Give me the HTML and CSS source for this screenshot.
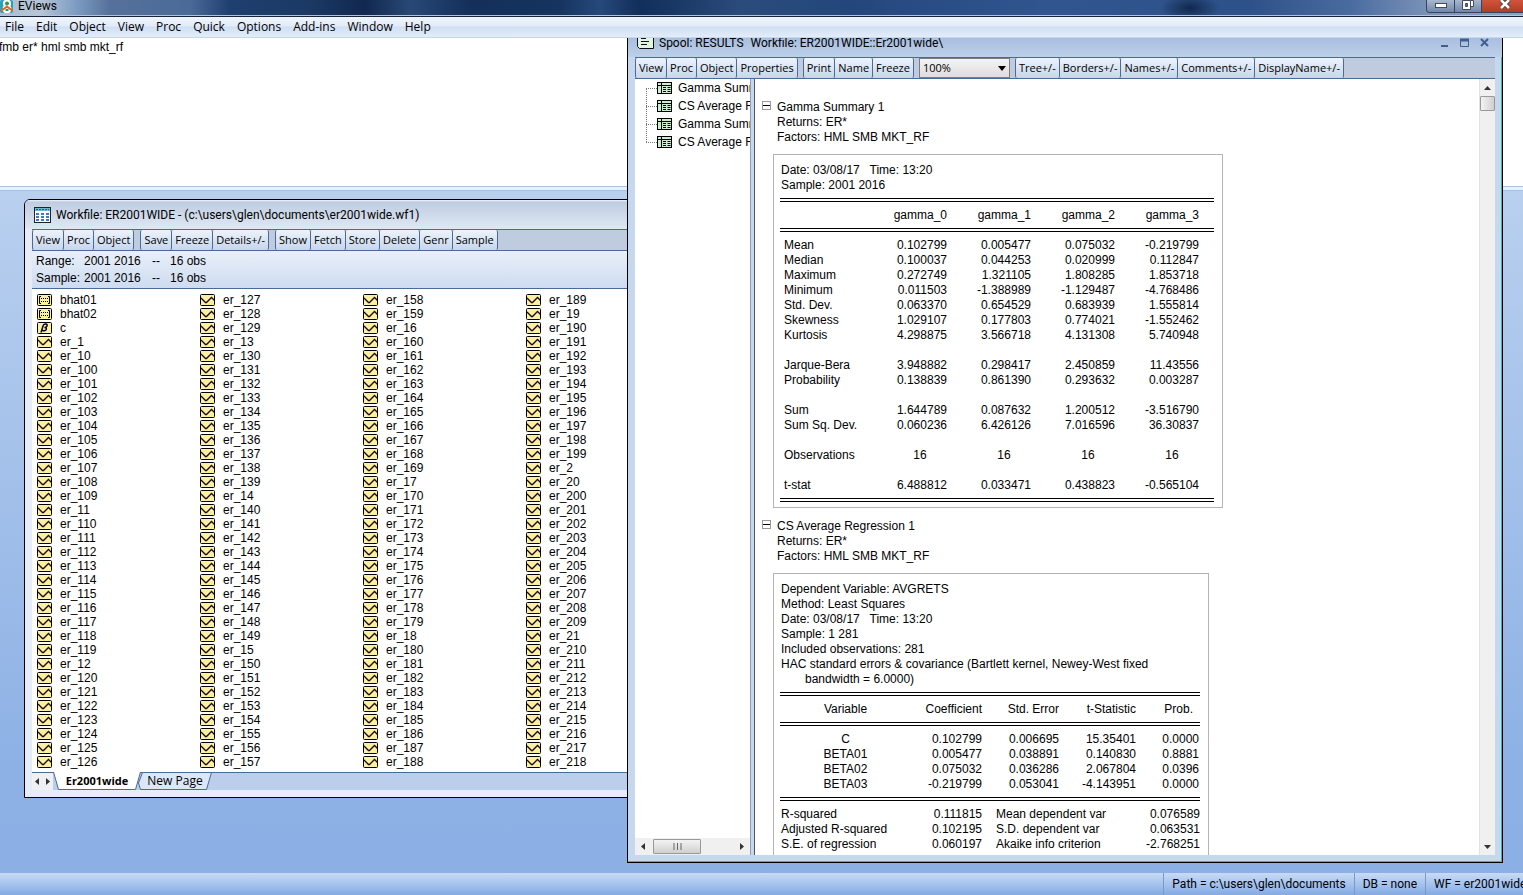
FILE: index.html
```html
<!DOCTYPE html>
<html lang="en">
<head>
<meta charset="utf-8">
<title>EViews</title>
<link rel="stylesheet" href="styles.css">
</head>
<body>
<svg class="sprite" aria-hidden="true">
  <symbol id="series" viewBox="0 0 15 12">
    <rect x="0.5" y="0.5" width="14" height="11" rx="1" fill="#fbf0a0" stroke="#000"/>
    <path d="M1 4l4.500 4.500h1L11.500 3.500l3 3" fill="none" stroke="#1a0808" stroke-width="1.300"/>
  </symbol>
  <symbol id="matrix" viewBox="0 0 15 12">
    <rect x="0.5" y="0.5" width="14" height="11" rx="1" fill="#fbf0a0" stroke="#000"/>
    <path d="M4 2.500H2.500v7H4M11 2.500h1.500v7H11" fill="none" stroke="#000"/>
    <path d="M4 4.500h7M4 7.500h7" fill="none" stroke="#000" stroke-dasharray="1 1"/>
  </symbol>
  <symbol id="coef" viewBox="0 0 15 12">
    <rect x="0.5" y="0.5" width="14" height="11" rx="1" fill="#fbf0a0" stroke="#000"/>
    <path d="M4 10.500L6.200 3.500Q7 1.800 8.800 2T10 4Q9.500 5.500 7.500 5.500Q9.800 5.700 9.300 7.500Q8.500 9.300 5.500 8.500" fill="none" stroke="#000" stroke-width="1.500"/>
  </symbol>
  <symbol id="table" viewBox="0 0 15 12">
    <rect x="0.500" y="0.500" width="14" height="11" fill="#cfeccf" stroke="#000"/>
    <path d="M0 3.500h15M4.500 0v12" stroke="#000" fill="none"/>
    <path d="M6 5.500h3M10.500 5.500h3M6 7.500h3M10.500 7.500h3M6 9.500h3M10.500 9.500h3" stroke="#000" fill="none"/>
  </symbol>
</svg>
<div class="app">
  <header class="titlebar">
    <svg class="logo" viewBox="0 0 13 13" aria-hidden="true">
      <rect width="13" height="13" rx="2" fill="#2f9fb8"/>
      <circle cx="7" cy="3.500" r="4" fill="#fff"/>
      <circle cx="7" cy="9" r="4.500" fill="#fff"/>
      <circle cx="7" cy="3.500" r="2" fill="#2d9a48"/>
      <path d="M1 10.500Q4 9 7 6.500Q10 9 13 10.500" fill="none" stroke="#e0672a" stroke-width="2"/>
      <path d="M5.500 10h3" stroke="#2d9a48" stroke-width="2"/>
    </svg>
    <span class="app-name">EViews</span>
    <div class="caption">
      <button class="cap" aria-label="Minimize"><svg width="12" height="5" viewBox="0 0 12 5"><rect x="0.500" y="0.500" width="11" height="4" fill="#fff" stroke="#444c5c"/></svg></button>
      <button class="cap" aria-label="Restore"><svg width="12" height="10" viewBox="0 0 12 10"><path d="M3.500 0.500h8v6h-8z" fill="#fff" stroke="#444c5c"/><path d="M0.500 0.500h8v9h-8z" fill="#fff" stroke="#444c5c"/><path d="M3.500 3.500h2v3h-2z" fill="#5c7199" stroke="#444c5c"/></svg></button>
      <button class="cap close" aria-label="Close"><svg width="12" height="9" viewBox="0 0 12 9"><path d="M2 0l8 8M10 0L2 8" stroke="#54403f" stroke-width="4.500"/><path d="M2 0l8 8M10 0L2 8" stroke="#fff" stroke-width="2.500"/></svg></button>
    </div>
  </header>
  <nav class="menu">
    <button>File</button><button>Edit</button><button>Object</button><button>View</button><button>Proc</button><button>Quick</button><button>Options</button><button>Add-ins</button><button>Window</button><button>Help</button>
  </nav>
  <main class="client">
    <textarea class="command" aria-label="Command window" spellcheck="false">fmb er* hml smb mkt_rf</textarea>
    <div class="splitter"></div>
    <div class="workspace"></div>

    <section class="win workfile">
      <div class="win-title">
        <svg width="17" height="16" viewBox="0 0 17 16" aria-hidden="true"><rect x="0.500" y="0.500" width="16" height="15" fill="#fff" stroke="#222"/><rect x="1" y="1" width="15" height="3" fill="#6fb7d6"/><path d="M2 2.500h13" stroke="#1e5f86" stroke-dasharray="2 1"/><path d="M3.500 6v8M8.500 6v8M13.500 6v8" stroke="#3f78c8" stroke-width="3" stroke-dasharray="2 1"/></svg>
        <span>Workfile: ER2001WIDE - (c:\users\glen\documents\er2001wide.wf1)</span>
      </div>
      <div class="toolbar">
        <div class="group"><button>View</button><button>Proc</button><button>Object</button></div>
        <div class="group"><button>Save</button><button>Freeze</button><button>Details+/-</button></div>
        <div class="group"><button>Show</button><button>Fetch</button><button>Store</button><button>Delete</button><button>Genr</button><button>Sample</button></div>
      </div>
      <dl class="info">
        <dt>Range:</dt><dd>2001 2016</dd><dd>--</dd><dd>16 obs</dd>
        <dt>Sample:</dt><dd>2001 2016</dd><dd>--</dd><dd>16 obs</dd>
      </dl>
      <ul class="objects" id="objects"></ul>
      <div class="pages">
        <div class="page-nav">
          <button aria-label="Previous page"><svg width="4" height="7" viewBox="0 0 4 7"><path d="M4 0v7L0 3.500z" fill="#333"/></svg></button>
          <button aria-label="Next page"><svg width="4" height="7" viewBox="0 0 4 7"><path d="M0 0v7l4-3.500z" fill="#333"/></svg></button>
        </div>
        <button class="page current"><svg class="tab-shape" viewBox="0 0 88 18" preserveAspectRatio="none" aria-hidden="true"><path d="M0.500 0L5.500 17.500h77L87.500 0" fill="#fff" stroke="#4c6a96"/></svg><span>Er2001wide</span></button>
        <button class="page"><svg class="tab-shape" viewBox="0 0 74 18" preserveAspectRatio="none" aria-hidden="true"><path d="M4.500 0.500L0.500 11l2 6.500h66L73.500 0.500z" fill="#dbe6f6" stroke="#4c6a96"/></svg><span>New Page</span></button>
      </div>
    </section>

    <section class="win spool">
      <div class="win-title">
        <svg width="17" height="12" viewBox="0 0 17 12" aria-hidden="true"><path d="M0.500 0v9.500l2 2h14V0" fill="#e2f4e2" stroke="#111"/><path d="M4 1.500h5M4 4.500h8M4 7.500h6" stroke="#111"/></svg>
        <span class="spool-name">Spool: RESULTS</span><span>Workfile: ER2001WIDE::Er2001wide\</span>
        <div class="win-buttons">
          <button aria-label="Minimize"><svg width="9" height="10" viewBox="0 0 9 10"><path d="M1 8h7" stroke="#3f5f8d" stroke-width="2"/></svg></button>
          <button aria-label="Maximize"><svg width="9" height="10" viewBox="0 0 9 10"><path d="M0.500 1v7.500h8V1" fill="none" stroke="#3f5f8d"/><path d="M0 2h9" stroke="#3f5f8d" stroke-width="3"/></svg></button>
          <button aria-label="Close"><svg width="9" height="10" viewBox="0 0 9 10"><path d="M1 1l7 7M8 1L1 8" stroke="#3f5f8d" stroke-width="2"/></svg></button>
        </div>
      </div>
      <div class="toolbar">
        <div class="group"><button>View</button><button>Proc</button><button>Object</button><button>Properties</button></div>
        <div class="group"><button>Print</button><button>Name</button><button>Freeze</button></div>
        <div class="zoom"><select aria-label="Zoom"><option>100%</option></select><svg width="8" height="5" viewBox="0 0 8 5" aria-hidden="true"><path d="M0 0h8L4 5z" fill="#000"/></svg></div>
        <div class="group"><button>Tree+/-</button><button>Borders+/-</button><button>Names+/-</button><button>Comments+/-</button><button>DisplayName+/-</button></div>
      </div>
      <div class="panes">
        <div class="tree-pane">
          <ul class="tree">
            <li><svg width="15" height="12"><use href="#table"/></svg>Gamma Summary 1</li>
            <li><svg width="15" height="12"><use href="#table"/></svg>CS Average Regression 1</li>
            <li><svg width="15" height="12"><use href="#table"/></svg>Gamma Summary 2</li>
            <li><svg width="15" height="12"><use href="#table"/></svg>CS Average Regression 2</li>
          </ul>
          <div class="hscroll">
            <button aria-label="Scroll left"><svg width="4" height="7" viewBox="0 0 4 7"><path d="M4 0v7L0 3.500z" fill="#333"/></svg></button>
            <div class="thumb"><svg width="9" height="7" viewBox="0 0 9 7"><path d="M1 0v7M4.500 0v7M8 0v7" stroke="#666"/></svg></div>
            <button aria-label="Scroll right"><svg width="4" height="7" viewBox="0 0 4 7"><path d="M0 0v7l4-3.500z" fill="#333"/></svg></button>
          </div>
        </div>
        <div class="divider"></div>
        <div class="output">
          <article class="entry">
            <button class="collapse" aria-label="Collapse Gamma Summary 1"></button>
            <div class="entry-head">Gamma Summary 1<br>Returns: ER*<br>Factors: HML SMB MKT_RF</div>
            <div class="card">
              <p>Date: 03/08/17 &nbsp; Time: 13:20<br>Sample: 2001 2016</p>
              <div class="rule"></div>
              <table class="gamma">
                <thead>
                  <tr><th></th><th>gamma_0</th><th>gamma_1</th><th>gamma_2</th><th>gamma_3</th></tr>
                  <tr><td colspan="5"><div class="rule"></div></td></tr>
                </thead>
                <tbody>
                  <tr><th>Mean</th><td>0.102799</td><td>0.005477</td><td>0.075032</td><td>-0.219799</td></tr>
                  <tr><th>Median</th><td>0.100037</td><td>0.044253</td><td>0.020999</td><td>0.112847</td></tr>
                  <tr><th>Maximum</th><td>0.272749</td><td>1.321105</td><td>1.808285</td><td>1.853718</td></tr>
                  <tr><th>Minimum</th><td>0.011503</td><td>-1.388989</td><td>-1.129487</td><td>-4.768486</td></tr>
                  <tr><th>Std. Dev.</th><td>0.063370</td><td>0.654529</td><td>0.683939</td><td>1.555814</td></tr>
                  <tr><th>Skewness</th><td>1.029107</td><td>0.177803</td><td>0.774021</td><td>-1.552462</td></tr>
                  <tr><th>Kurtosis</th><td>4.298875</td><td>3.566718</td><td>4.131308</td><td>5.740948</td></tr>
                  <tr class="gap"><th>Jarque-Bera</th><td>3.948882</td><td>0.298417</td><td>2.450859</td><td>11.43556</td></tr>
                  <tr><th>Probability</th><td>0.138839</td><td>0.861390</td><td>0.293632</td><td>0.003287</td></tr>
                  <tr class="gap"><th>Sum</th><td>1.644789</td><td>0.087632</td><td>1.200512</td><td>-3.516790</td></tr>
                  <tr><th>Sum Sq. Dev.</th><td>0.060236</td><td>6.426126</td><td>7.016596</td><td>36.30837</td></tr>
                  <tr class="gap count"><th>Observations</th><td>16</td><td>16</td><td>16</td><td>16</td></tr>
                  <tr class="gap"><th>t-stat</th><td>6.488812</td><td>0.033471</td><td>0.438823</td><td>-0.565104</td></tr>
                </tbody>
              </table>
              <div class="rule"></div>
            </div>
          </article>
          <article class="entry">
            <button class="collapse" aria-label="Collapse CS Average Regression 1"></button>
            <div class="entry-head">CS Average Regression 1<br>Returns: ER*<br>Factors: HML SMB MKT_RF</div>
            <div class="card tall">
              <p>Dependent Variable: AVGRETS<br>Method: Least Squares<br>Date: 03/08/17 &nbsp; Time: 13:20<br>Sample: 1 281<br>Included observations: 281<br>HAC standard errors &amp; covariance (Bartlett kernel, Newey-West fixed<br><span class="indent">bandwidth = 6.0000)</span></p>
              <div class="rule"></div>
              <table class="coefs">
                <thead>
                  <tr><th>Variable</th><th>Coefficient</th><th>Std. Error</th><th>t-Statistic</th><th>Prob.</th></tr>
                  <tr><td colspan="5"><div class="rule"></div></td></tr>
                </thead>
                <tbody>
                  <tr><th>C</th><td>0.102799</td><td>0.006695</td><td>15.35401</td><td>0.0000</td></tr>
                  <tr><th>BETA01</th><td>0.005477</td><td>0.038891</td><td>0.140830</td><td>0.8881</td></tr>
                  <tr><th>BETA02</th><td>0.075032</td><td>0.036286</td><td>2.067804</td><td>0.0396</td></tr>
                  <tr><th>BETA03</th><td>-0.219799</td><td>0.053041</td><td>-4.143951</td><td>0.0000</td></tr>
                </tbody>
              </table>
              <div class="rule"></div>
              <table class="stats">
                <tbody>
                  <tr><th>R-squared</th><td>0.111815</td><th>Mean dependent var</th><td>0.076589</td></tr>
                  <tr><th>Adjusted R-squared</th><td>0.102195</td><th>S.D. dependent var</th><td>0.063531</td></tr>
                  <tr><th>S.E. of regression</th><td>0.060197</td><th>Akaike info criterion</th><td>-2.768251</td></tr>
                </tbody>
              </table>
            </div>
          </article>
        </div>
        <div class="vscroll">
          <button aria-label="Scroll up"><svg width="7" height="4" viewBox="0 0 7 4"><path d="M0 4h7L3.500 0z" fill="#333"/></svg></button>
          <div class="thumb"></div>
          <button aria-label="Scroll down"><svg width="7" height="4" viewBox="0 0 7 4"><path d="M0 0h7L3.500 4z" fill="#333"/></svg></button>
        </div>
      </div>
    </section>
  </main>
  <footer class="status">
    <span>Path = c:\users\glen\documents</span><span>DB = none</span><span class="wf">WF = er2001wide</span>
  </footer>
</div>
<script src="script.js"></script>
</body>
</html>
```
FILE: styles.css
```css
*, *::before { box-sizing: border-box; }
body { margin: 0; font: 12px/15px "Liberation Sans", Arial, sans-serif; color: #000; }
button { font: inherit; color: inherit; background: none; border: 0; padding: 0; margin: 0; }
ul, dl, dd, p { margin: 0; padding: 0; list-style: none; }
svg { display: block; flex: none; }
.sprite { position: absolute; width: 0; height: 0; }

.app { display: flex; flex-direction: column; height: 100vh; overflow: hidden; }

.titlebar {
  display: flex; align-items: flex-start; height: 17px; flex: none;
  font: 12px/13px Roboto, "Segoe UI", sans-serif;
  border-bottom: 1px solid #16233c;
  box-shadow: inset 0 -1px #b4c3d8;
  background:
    radial-gradient(ellipse 30px 14px at 1190px 8px, #12284d, transparent),
    linear-gradient(90deg, #a9bdd4 0, #b8c5d6 40px, #7f9dc4 75px, #55719b 110px, #4c6a98 190px, #1f3f6e 230px, #1b3964 310px, #112850 365px, #2a4876 410px, #132f5a 470px, #16345f 560px, #26497b 600px, #122e5a 640px, #2b4b7a 740px, #23477d 850px, #31568f 1050px, #2d5189 1250px, #4a6ba0 1350px, #7c93b8 1430px, #8ea3c3 100%);
}
.logo { width: 13px; height: 13px; }
.app-name { margin-left: 5px; }
.caption { display: flex; height: 13px; margin-left: auto; border: 1px solid #39455c; border-top: 0; border-right: 0; border-radius: 0 0 0 4px; overflow: hidden; }
.cap { width: 28px; display: flex; justify-content: center; align-items: flex-start; padding-top: 3px; background: linear-gradient(#a9b8d0, #7187ab); border-right: 1px solid #39455c; }
.cap + .cap { width: 27px; padding-top: 0; }
.cap.close { width: 41px; padding-left: 4px; border: 0; background: linear-gradient(#d0553c, #b53a22); }

.menu {
  display: flex; align-items: center; gap: 12px; height: 21px; padding-left: 5px; flex: none;
  font: 12px/17px "Open Sans", "Segoe UI", sans-serif;
  background: linear-gradient(#f0f5fc, #e2ebf8 45%, #cfdff3 50%, #e4edf9);
  border-bottom: 1px solid #c5d7ee;
}
.menu button { padding-bottom: 1px; }

.client { position: relative; display: flex; flex-direction: column; flex: 1; min-height: 0; overflow: hidden; }
.command { display: block; height: 148px; margin: 0; padding: 2px 0; border: 0; resize: none; outline: 0; font: inherit; text-indent: -1px; color: #000; background: #fff; }
.splitter { height: 5px; background: #e9f0fa; border: 1px solid #a9bfdf; border-width: 1px 0; }
.workspace { flex: 1; background: linear-gradient(#b9d0ef, #a4c1ea 40%, #8db1e5 85%, #8cb0e5); }

.win { position: absolute; display: flex; flex-direction: column; border: 1px solid #000; }
.win-title { display: flex; align-items: center; font: 12px/16px Roboto, "Segoe UI", sans-serif; white-space: nowrap; }
.toolbar { display: flex; gap: 6px; height: 22px; flex: none; border: 1px solid #4c6a96; border-width: 1px 0; background: #bfccdf; font: 11px/16px "Open Sans", "Segoe UI", sans-serif; white-space: nowrap; }
.group { display: flex; }
.group button { padding: 0 3px 1px; border-right: 1px solid #4c6a96; background: linear-gradient(#edf3fb, #c6d6ec); border-radius: 2px; }
.group button:first-child { border-left: 1px solid #4c6a96; }

.workfile { left: 24px; top: 161px; width: 640px; padding: 0 7px 7px; border-radius: 6px 6px 0 0; background: #e6edf8; }
.workfile .win-title { height: 29px; gap: 5px; margin: 0 -7px; padding: 0 9px; border-radius: 5px 5px 0 0; background: linear-gradient(#f0f5fb 0, #bfcde1 2px, #dfe8f4); }
.info { display: grid; grid-template-columns: 48px 68px 18px 1fr; grid-auto-rows: 17px; align-items: center; padding: 2px 0 1px 4px; border-bottom: 1px solid #4c6a96; background: linear-gradient(#e8eff9, #cedcf1); }
.objects { display: grid; grid-template-rows: repeat(34, 14px); grid-auto-flow: column; grid-auto-columns: 163px; padding: 4px 0 3px 5px; background: #fff; overflow: hidden; }
.objects li { display: flex; align-items: center; gap: 8px; line-height: 14px; }
.pages { display: flex; height: 18px; background: #bbcfec; border-top: 1px solid #4c6a96; font: 12px/17px "Open Sans", "Segoe UI", sans-serif; }
.page-nav { display: flex; width: 21px; justify-content: space-around; background: #eef0f4; }
.page { position: relative; width: 88px; margin-top: -1px; padding-bottom: 1px; }
.page + .page { width: 74px; margin-left: -3px; }
.page span { position: relative; }
.current { font-weight: 700; font-size: 11px; z-index: 1; }
.tab-shape { position: absolute; inset: 0; width: 100%; height: 100%; }

.spool { left: 627px; right: 20px; top: 0; bottom: 10px; padding: 0 7px; border-top: 0; background: #c7d7ee; box-shadow: inset -1px -1px #33b8b8; }
.spool .win-title { height: 19px; margin: 0 -7px; padding: 0 13px 9px 9px; gap: 5px; background: linear-gradient(#a9bfdf, #bdcfe9); }
.spool-name { margin-right: 2px; }
.win-buttons { display: flex; gap: 11px; margin-left: auto; }
.spool .toolbar { gap: 5px; }
.zoom { position: relative; width: 91px; }
.zoom select { display: block; appearance: none; width: 100%; height: 20px; padding: 0 3px 1px; font: inherit; color: #000; border: 1px solid #7d7d7d; border-radius: 0; background: linear-gradient(#f4f4f4, #ddd); }
.zoom svg { position: absolute; right: 4px; top: 8px; pointer-events: none; }
.panes { display: flex; flex: 1; min-height: 0; margin-bottom: 7px; background: #fff; }
.tree-pane { display: flex; flex-direction: column; justify-content: space-between; width: 115px; overflow: hidden; }
.tree { margin-left: 11px; position: relative; }
.tree::before { content: ""; position: absolute; left: 0; top: 9px; bottom: 9px; border-left: 1px dotted #777; }
.tree li { display: flex; align-items: center; height: 18px; white-space: nowrap; }
.tree li::before { content: ""; flex: none; width: 11px; border-top: 1px dotted #777; }
.tree svg { margin-right: 6px; }
.hscroll { display: flex; height: 17px; padding: 1px 4px; background: #f0f0f0; }
.hscroll button { width: 8px; display: flex; align-items: center; justify-content: center; }
.hscroll .thumb { display: flex; align-items: center; justify-content: center; width: 48px; margin: 0 auto 0 6px; border: 1px solid #999; border-radius: 1px; background: linear-gradient(#f3f3f3, #e2e2e2 50%, #cfcfcf); }
.divider { width: 5px; background: #c7d7ee; border-right: 1px solid #555; border-left: 1px solid #8ba0c0; }
.output { flex: 1; min-width: 0; overflow: hidden; padding: 21px 0 0 7px; }
.entry { display: grid; grid-template-columns: 11px 1fr; margin-bottom: 11px; }
.collapse { width: 9px; height: 9px; margin-top: 1px; border: 1px solid #999; background: linear-gradient(#000, #000) center / 7px 1px no-repeat; }
.entry-head { padding-left: 4px; }
.card { grid-column: 2; justify-self: start; margin-top: 9px; padding: 8px 8px 0 6px; border: 1px solid #b4b4b4; }
.card.tall { padding-bottom: 32px; }
.card p { padding-left: 1px; }
.indent { padding-left: 24px; }
.rule { height: 15px; padding-top: 5px; }
.rule:last-child { margin-bottom: -1px; }
.rule::before { content: ""; display: block; height: 4px; border: 1px solid #000; border-width: 1px 0; }
table { border-collapse: collapse; table-layout: fixed; }
th, td { padding: 0; height: 15px; font-weight: 400; text-align: right; vertical-align: bottom; white-space: nowrap; }
td .rule:last-child { margin-bottom: 0; }
.gamma { width: 434px; }
.gamma th, .gamma td { width: 84px; padding-right: 15px; }
.gamma th:first-child { width: 98px; padding: 0 0 0 4px; text-align: left; }
.gamma td[colspan] { padding: 0; }
.gamma .gap > * { height: 30px; }
.gamma .count td { padding: 0; text-align: center; }
.coefs, .stats { width: 420px; }
.coefs th { width: 77px; }
.coefs th, .coefs td { padding-right: 1px; }
.coefs th:first-child { width: 132px; text-align: center; }
.coefs th:nth-child(2) { width: 71px; }
.coefs th:last-child { width: 63px; padding-right: 7px; }
.coefs td[colspan] { padding: 0; }
.stats th { padding-left: 1px; text-align: left; }
.stats th:nth-child(3) { width: 148px; padding-left: 14px; }
.stats td { width: 70px; }
.stats th:first-child { width: 132px; }
.vscroll { display: flex; flex-direction: column; width: 16px; background: #f0f0f0; border-left: 1px solid #e2e2e2; }
.vscroll button { height: 17px; display: flex; align-items: center; justify-content: center; }
.vscroll .thumb { height: 15px; margin-bottom: auto; border: 1px solid #999; border-radius: 1px; background: linear-gradient(90deg, #f3f3f3, #e2e2e2 50%, #cfcfcf); }

.status { display: flex; justify-content: flex-end; height: 22px; flex: none; font: 12px/22px Roboto, "Segoe UI", sans-serif; white-space: nowrap; background: linear-gradient(#c9dbf5, #a6c3ee 50%, #84aae2); }
.status span { padding: 0 8px; border-left: 1px solid #7c99c4; }
.status .wf { width: 98px; padding-right: 0; overflow: hidden; }
```
FILE: script.js
```js
const series = Array.from({ length: 281 }, (_, i) => "er_" + (i + 1)).sort();
const objects = [["matrix", "bhat01"], ["matrix", "bhat02"], ["coef", "c"]]
  .concat(series.map((name) => ["series", name]));
const rows = 34;
const columns = 4;

document.getElementById("objects").innerHTML = objects
  .slice(0, rows * columns)
  .map(([icon, name]) => `<li><svg width="15" height="12"><use href="#${icon}"/></svg>${name}</li>`)
  .join("");
```
